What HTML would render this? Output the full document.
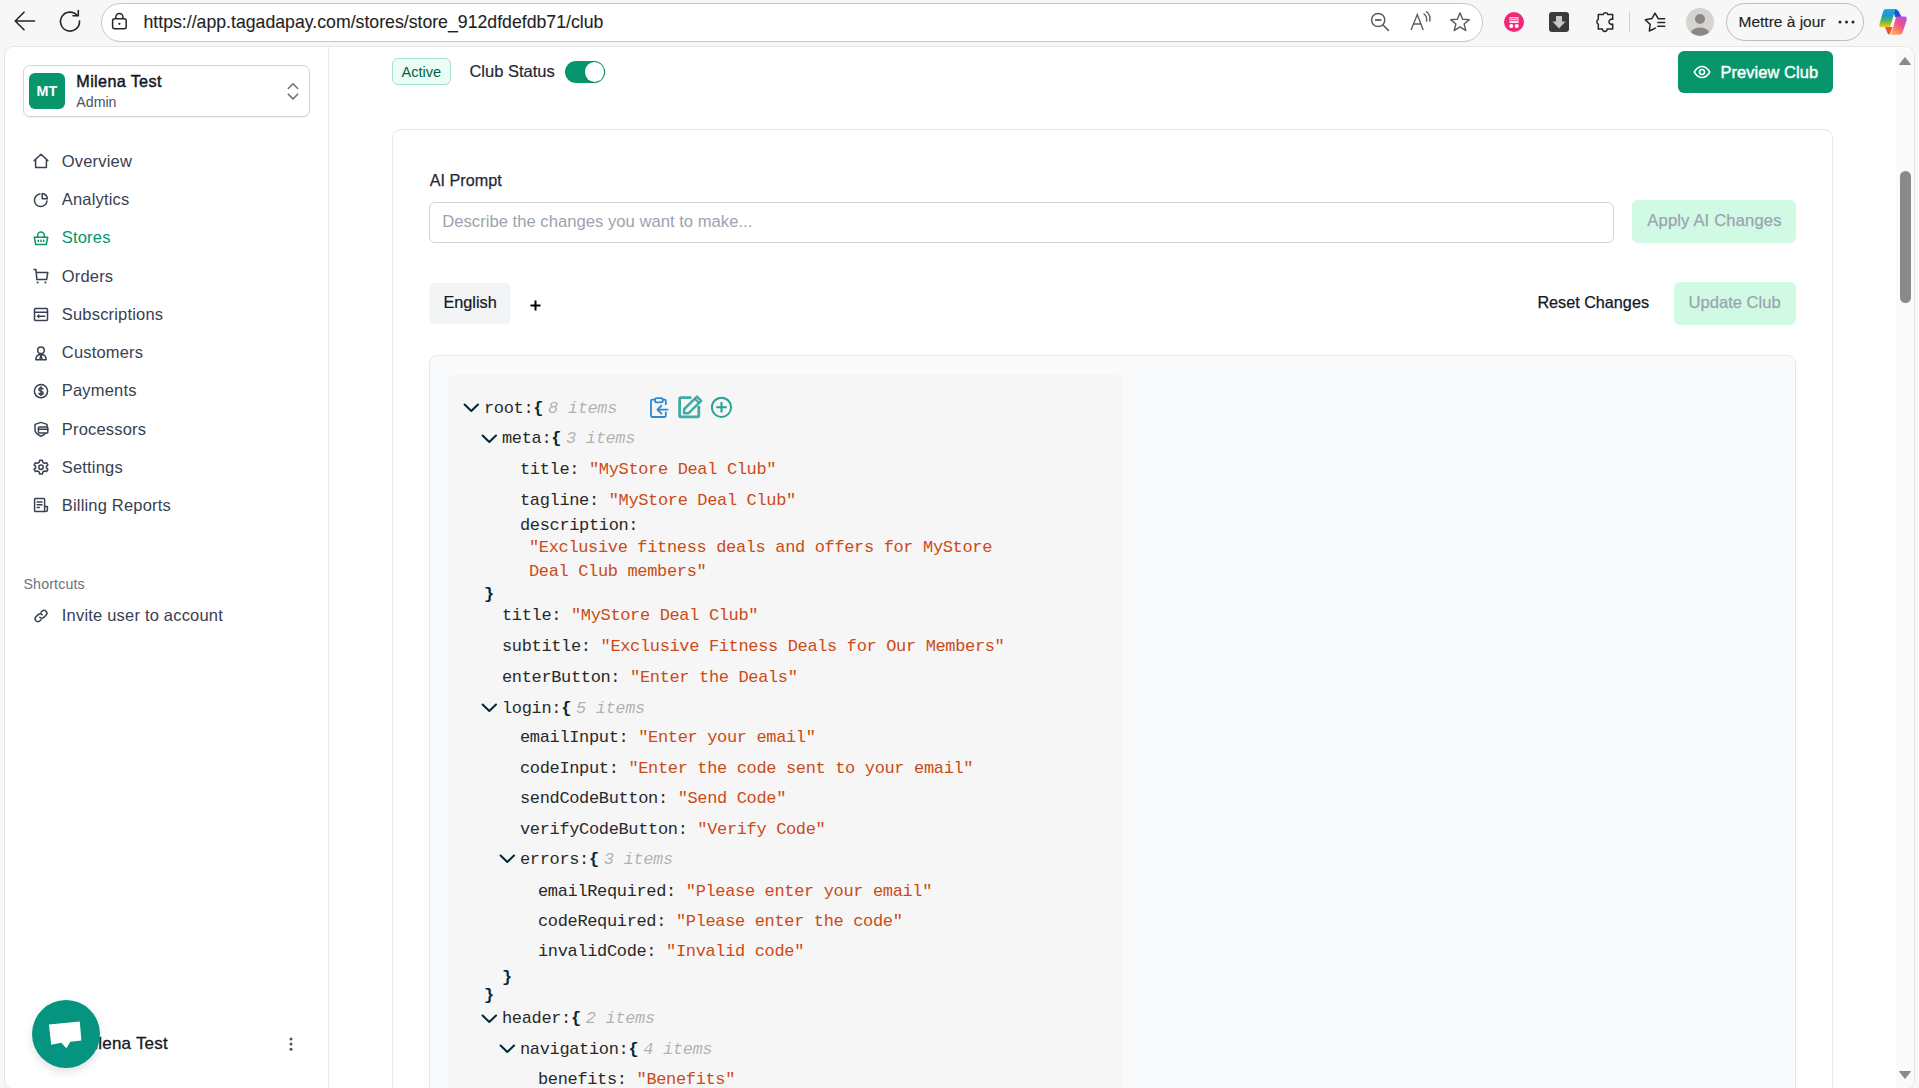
<!DOCTYPE html>
<html><head><meta charset="utf-8">
<style>
html,body{margin:0;padding:0;}
body{width:1919px;height:1088px;overflow:hidden;background:#f7f7f7;position:relative;font-family:"Liberation Sans", sans-serif;}
.a{position:absolute;}
.t{position:absolute;line-height:1;white-space:pre;}
.S{font-family:"Liberation Sans", sans-serif;}
.M{font-family:"Liberation Mono", monospace;}
svg{position:absolute;overflow:visible;}
</style></head><body>
<svg style="left:14px;top:11px;" width="22" height="20" viewBox="0 0 22 20"><path d="M1.2 10 H20.5 M10 1.2 L1.2 10 L10 18.8" fill="none" stroke="#262626" stroke-width="1.6" stroke-linecap="round" stroke-linejoin="round"/></svg>
<svg style="left:58px;top:7.9px;" width="24" height="24" viewBox="0 0 24 24"><path d="M19.4 7.6 A9.5 9.5 0 1 0 21.5 13" fill="none" stroke="#262626" stroke-width="1.6" stroke-linecap="round"/><path d="M20.3 2.5 V7.8 H15" fill="none" stroke="#262626" stroke-width="1.6" stroke-linecap="round" stroke-linejoin="round"/></svg>
<div class="a" style="left:100.5px;top:2.5px;width:1382px;height:39px;background:#fff;border:1px solid #c7c7c7;border-radius:20px;box-sizing:border-box;"></div>
<svg style="left:111px;top:12px;" width="18" height="18" viewBox="0 0 18 18"><rect x="1.6" y="6.8" width="13.6" height="10" rx="2" fill="none" stroke="#262626" stroke-width="1.5"/><path d="M4.8 6.8 V5 A3.6 3.6 0 0 1 12 5 V6.8" fill="none" stroke="#262626" stroke-width="1.5"/><circle cx="8.4" cy="11.8" r="1.1" fill="#262626"/></svg>
<div class="t S" style="left:143.5px;top:13.62px;font-size:17.7px;color:#1f1f1f;-webkit-text-stroke:0.1px currentColor;">https://app.tagadapay.com/stores/store_912dfdefdb71/club</div>
<svg style="left:1368px;top:11px;" width="24" height="24" viewBox="0 0 24 24"><circle cx="10.2" cy="9" r="6.6" fill="none" stroke="#5c5c5c" stroke-width="1.5"/><path d="M7 9 H13.4" stroke="#5c5c5c" stroke-width="1.8"/><path d="M15 14 L20.4 19.4" stroke="#5c5c5c" stroke-width="1.6" stroke-linecap="round"/></svg>
<svg style="left:1410px;top:11px;" width="24" height="22" viewBox="0 0 24 22"><path d="M1 19 L7.3 3.6 L13.2 19 M3.6 13 H11" fill="none" stroke="#5c5c5c" stroke-width="1.4"/><path d="M14 3 A7 7 0 0 1 16.5 10 M16.6 0.8 A9.5 9.5 0 0 1 19.8 10" fill="none" stroke="#5c5c5c" stroke-width="1.4" stroke-linecap="round"/></svg>
<svg style="left:1449px;top:11px;" width="24" height="22" viewBox="0 0 24 22"><path d="M11 1.8 L13.6 8.2 L20.3 8.6 L15.1 13 L16.8 19.6 L11 15.9 L5.2 19.6 L6.9 13 L1.7 8.6 L8.4 8.2 Z" fill="none" stroke="#5c5c5c" stroke-width="1.4" stroke-linejoin="round"/></svg>
<div class="a" style="left:1504px;top:12px;width:20px;height:20px;background:#f0287a;border-radius:50%;"></div>
<svg style="left:1504px;top:12px;" width="20" height="20" viewBox="0 0 20 20"><path d="M5.5 5.2 H14.5 V11 H5.5 Z" fill="#fff" opacity="0.9"/><path d="M6 6.8 H14 M6 8.6 H14" stroke="#f0287a" stroke-width="0.8"/><circle cx="7.3" cy="14" r="2" fill="#fff"/><circle cx="12.7" cy="14" r="2" fill="#fff"/></svg>
<div class="a" style="left:1549px;top:12px;width:20px;height:20px;background:#3b3b3b;border-radius:3px;"></div>
<svg style="left:1549px;top:12px;" width="20" height="20" viewBox="0 0 20 20"><path d="M7 4 H13 V9.5 H16.5 L10 16.5 L3.5 9.5 H7 Z" fill="#c9c9c9"/></svg>
<svg style="left:1590px;top:8px;" width="28" height="28" viewBox="1590 8 28 28"><path d="M1598.3 14.5 H1603.2 A2.4 2.4 0 0 1 1607.8 14.5 H1612.7 V19.4 A2.6 2.6 0 1 0 1612.7 24.1 V29 H1607.2 A2.4 2.4 0 0 1 1602.4 29 H1598.3 V24.1 A2.6 2.6 0 0 1 1598.3 19.4 Z" fill="none" stroke="#262626" stroke-width="1.5" stroke-linejoin="round"/></svg>
<div class="a" style="left:1629px;top:12px;width:1px;height:20px;background:#d0d0d0;"></div>
<svg style="left:1640px;top:8px;" width="30" height="28" viewBox="1640 8 30 28"><path d="M1655.4 28.1 L1649.3 31 L1650.2 24.4 L1645.3 19.8 L1651.9 18.6 L1655 13.2 L1658.2 18.7 H1664.6" fill="none" stroke="#262626" stroke-width="1.5" stroke-linejoin="round" stroke-linecap="round"/><path d="M1657.8 22.5 H1664.7 M1657.8 26.3 H1664.7" stroke="#262626" stroke-width="1.5" stroke-linecap="round"/></svg>
<div class="a" style="left:1686px;top:8px;width:28px;height:28px;background:#d6d4d0;border-radius:50%;"></div>
<svg style="left:1686px;top:8px;" width="28" height="28" viewBox="0 0 28 28"><circle cx="14" cy="11" r="5" fill="#8a8784"/><path d="M4.8 24 A10 7.5 0 0 1 23.2 24 A13 13 0 0 1 4.8 24 Z" fill="#8a8784"/></svg>
<div class="a" style="left:1726px;top:3px;width:138px;height:38px;border:1px solid #bdbdbd;border-radius:19px;box-sizing:border-box;background:#f7f7f7;"></div>
<div class="t S" style="left:1738.5px;top:13.98px;font-size:15.5px;color:#1f1f1f;-webkit-text-stroke:0.15px currentColor;">Mettre à jour</div>
<svg style="left:1838px;top:19px;" width="20" height="6" viewBox="0 0 20 6"><circle cx="2" cy="3" r="1.5" fill="#262626"/><circle cx="8.5" cy="3" r="1.5" fill="#262626"/><circle cx="15" cy="3" r="1.5" fill="#262626"/></svg>
<svg style="left:1874px;top:4px;" width="40" height="36" viewBox="0 0 40 36"><defs><linearGradient id="cpa" x1="0" y1="0" x2="0" y2="1"><stop offset="0" stop-color="#19a9f2"/><stop offset="0.35" stop-color="#1f96c8"/><stop offset="0.65" stop-color="#5db35a"/><stop offset="1" stop-color="#f6d20a"/></linearGradient><linearGradient id="cpb" x1="1" y1="0" x2="0.3" y2="1"><stop offset="0" stop-color="#b14cf2"/><stop offset="0.5" stop-color="#f0508c"/><stop offset="1" stop-color="#ffa85a"/></linearGradient></defs><path d="M19 5.2 Q24 4.5 26 10 L27.5 13 H21 Z" fill="#1d4fd8"/><path d="M11.5 5 H21.5 L16 23.2 H7.5 Q5 23.2 5.4 20.5 L8.8 8.6 Q9.8 5 11.5 5 Z" fill="url(#cpa)"/><path d="M11 23 H18.5 L16.2 29.5 Q15 31.3 13.6 29.6 Z" fill="#f45234"/><path d="M22.6 12.6 H30.5 Q33.4 12.8 32.6 16.2 L28.6 28.2 Q27.6 30.8 25 30.8 H16.8 L22 13.4 Z" fill="url(#cpb)"/></svg>
<div class="a" style="left:4px;top:46px;width:1911px;height:1043.5px;background:#fff;border:1px solid #e6e6e6;border-radius:10px;box-sizing:border-box;"></div>
<div class="a" style="left:328px;top:47px;width:1px;height:1041px;background:#e5e7eb;"></div>
<div class="a" style="left:23px;top:65px;width:287px;height:52px;border:1px solid #d1d5db;border-radius:7px;box-sizing:border-box;background:#fff;box-shadow:0 1px 2px rgba(0,0,0,0.05);"></div>
<div class="a" style="left:29px;top:73px;width:36px;height:36px;background:#07966b;border-radius:6px;"></div>
<div class="t S" style="left:36.5px;top:84.00px;font-size:14.3px;color:#fff;font-weight:700;">MT</div>
<div class="t S" style="left:76.3px;top:73.09px;font-size:16.2px;color:#111827;letter-spacing:0.35px;-webkit-text-stroke:0.45px currentColor;">Milena Test</div>
<div class="t S" style="left:76.3px;top:94.98px;font-size:14.2px;color:#4b5563;">Admin</div>
<svg style="left:286px;top:82px;" width="14" height="19" viewBox="0 0 14 19"><path d="M2.3 6.5 L7 1.8 L11.7 6.5 M2.3 12.2 L7 16.9 L11.7 12.2" fill="none" stroke="#6b7280" stroke-width="1.6" stroke-linecap="round" stroke-linejoin="round"/></svg>
<div class="t S" style="left:61.8px;top:153.03px;font-size:16.5px;color:#374151;letter-spacing:0.18px;">Overview</div>
<div class="t S" style="left:61.8px;top:191.43px;font-size:16.5px;color:#374151;letter-spacing:0.18px;">Analytics</div>
<div class="t S" style="left:61.8px;top:229.43px;font-size:16.5px;color:#059669;letter-spacing:0.18px;">Stores</div>
<div class="t S" style="left:61.8px;top:267.93px;font-size:16.5px;color:#374151;letter-spacing:0.18px;">Orders</div>
<div class="t S" style="left:61.8px;top:305.93px;font-size:16.5px;color:#374151;letter-spacing:0.18px;">Subscriptions</div>
<div class="t S" style="left:61.8px;top:344.43px;font-size:16.5px;color:#374151;letter-spacing:0.18px;">Customers</div>
<div class="t S" style="left:61.8px;top:382.43px;font-size:16.5px;color:#374151;letter-spacing:0.18px;">Payments</div>
<div class="t S" style="left:61.8px;top:420.73px;font-size:16.5px;color:#374151;letter-spacing:0.18px;">Processors</div>
<div class="t S" style="left:61.8px;top:458.73px;font-size:16.5px;color:#374151;letter-spacing:0.18px;">Settings</div>
<div class="t S" style="left:61.8px;top:497.33px;font-size:16.5px;color:#374151;letter-spacing:0.18px;">Billing Reports</div>
<svg style="left:33px;top:153.1px;" width="16" height="16" viewBox="0 0 16 16"><path d="M1.2 7.6 L8 1.2 L14.8 7.6 M2.6 6.3 V14.6 H13.4 V6.3" fill="none" stroke="#374151" stroke-width="1.5" stroke-linecap="round" stroke-linejoin="round"/></svg>
<svg style="left:33px;top:191.5px;" width="16" height="16" viewBox="0 0 16 16"><path d="M14 9 A6.3 6.3 0 1 1 7 2" fill="none" stroke="#374151" stroke-width="1.5" stroke-linecap="round" stroke-linejoin="round"/><path d="M9.2 1.6 A6 6 0 0 1 14.4 6.8 H9.2 Z" fill="none" stroke="#374151" stroke-width="1.5" stroke-linecap="round" stroke-linejoin="round"/></svg>
<svg style="left:33px;top:229.5px;" width="16" height="16" viewBox="0 0 16 16"><path d="M1.3 7.3 H14.7 L13.3 14.4 H2.7 Z M4.6 7.3 V5.5 A3.4 3.4 0 0 1 11.4 5.5 V7.3" fill="none" stroke="#059669" stroke-width="1.5" stroke-linecap="round" stroke-linejoin="round"/><path d="M5.3 10.2 V11.6 M8 10.2 V11.6 M10.7 10.2 V11.6" fill="none" stroke="#059669" stroke-width="1.5" stroke-linecap="round" stroke-linejoin="round"/></svg>
<svg style="left:33px;top:268px;" width="16" height="16" viewBox="0 0 16 16"><path d="M1 1.6 H3 L3.8 11.6 H13.6 L14.8 4.4 H4" fill="none" stroke="#374151" stroke-width="1.5" stroke-linecap="round" stroke-linejoin="round"/><circle cx="4.6" cy="14.6" r="1" fill="#374151"/><circle cx="12.4" cy="14.6" r="1" fill="#374151"/></svg>
<svg style="left:33px;top:306px;" width="16" height="16" viewBox="0 0 16 16"><rect x="1.5" y="2.5" width="13" height="12" rx="1" fill="none" stroke="#374151" stroke-width="1.5" stroke-linecap="round" stroke-linejoin="round"/><path d="M1.5 6.3 H14.5 M4.3 10.2 H7 M5.6 9 V11.4 M8 10.2 H11.7" fill="none" stroke="#374151" stroke-width="1.5" stroke-linecap="round" stroke-linejoin="round"/></svg>
<svg style="left:33px;top:344.5px;" width="16" height="16" viewBox="0 0 16 16"><circle cx="8" cy="5.2" r="3.3" fill="none" stroke="#374151" stroke-width="1.5" stroke-linecap="round" stroke-linejoin="round"/><path d="M2.8 14.8 Q3 9.6 8 9.6 Q13 9.6 13.2 14.8 Z M8 9.6 L6.8 14.8 M8 9.6 L9.2 14.8" fill="none" stroke="#374151" stroke-width="1.5" stroke-linecap="round" stroke-linejoin="round"/></svg>
<svg style="left:33px;top:382.5px;" width="16" height="16" viewBox="0 0 16 16"><circle cx="8" cy="8.2" r="6.6" fill="none" stroke="#374151" stroke-width="1.5" stroke-linecap="round" stroke-linejoin="round"/><path d="M10 6 Q9.5 4.9 8 4.9 Q5.9 4.9 5.9 6.5 Q5.9 7.8 8 8.2 Q10.2 8.6 10.2 10 Q10.2 11.5 8 11.5 Q6.4 11.5 5.9 10.4 M8 3.8 V12.6" fill="none" stroke="#374151" stroke-width="1.5" stroke-linecap="round" stroke-linejoin="round" stroke-width="1.1"/></svg>
<svg style="left:33px;top:420.8px;" width="16" height="16" viewBox="0 0 16 16"><path d="M8 1.4 L14 3.4 V8.8 Q14 12.8 8 15.2 Q2 12.8 2 8.8 V3.4 Z" fill="none" stroke="#374151" stroke-width="1.5" stroke-linecap="round" stroke-linejoin="round"/><rect x="5.4" y="6" width="9.4" height="6" rx="0.8" fill="#fff" fill="none" stroke="#374151" stroke-width="1.5" stroke-linecap="round" stroke-linejoin="round"/><path d="M5.4 8.2 H14.8" fill="none" stroke="#374151" stroke-width="1.5" stroke-linecap="round" stroke-linejoin="round"/></svg>
<svg style="left:33px;top:458.8px;" width="16" height="16" viewBox="0 0 16 16"><path d="M6.7 1.3 H9.3 L9.8 3.3 L11.6 4.3 L13.6 3.7 L14.9 6 L13.4 7.4 V9 L14.9 10.4 L13.6 12.6 L11.6 12 L9.8 13 L9.3 15 H6.7 L6.2 13 L4.4 12 L2.4 12.6 L1.1 10.4 L2.6 9 V7.4 L1.1 6 L2.4 3.7 L4.4 4.3 L6.2 3.3 Z" fill="none" stroke="#374151" stroke-width="1.5" stroke-linecap="round" stroke-linejoin="round"/><circle cx="8" cy="8.2" r="2.2" fill="none" stroke="#374151" stroke-width="1.5" stroke-linecap="round" stroke-linejoin="round"/></svg>
<svg style="left:33px;top:497.4px;" width="16" height="16" viewBox="0 0 16 16"><path d="M12.6 14.6 H2.4 Q1.6 14.6 1.6 13.8 V2.2 Q1.6 1.4 2.4 1.4 H10.8 Q11.6 1.4 11.6 2.2 V13.6 Q11.6 14.6 12.6 14.6 Q14.4 14.6 14.4 13.2 V9.5 H11.6" fill="none" stroke="#374151" stroke-width="1.5" stroke-linecap="round" stroke-linejoin="round"/><path d="M4.2 5 H9 M4.2 7.8 H9 M4.2 10.6 H6.4" fill="none" stroke="#374151" stroke-width="1.5" stroke-linecap="round" stroke-linejoin="round"/></svg>
<div class="t S" style="left:23.5px;top:576.88px;font-size:14.2px;color:#6b7280;letter-spacing:0.15px;">Shortcuts</div>
<div class="t S" style="left:61.8px;top:606.73px;font-size:16.5px;color:#374151;letter-spacing:0.2px;">Invite user to account</div>
<svg style="left:33px;top:607.8px;" width="16" height="16" viewBox="0 0 16 16"><path d="M6.8 9.2 A2.8 2.8 0 0 0 10.8 9.4 L13 7.2 A2.8 2.8 0 0 0 9 3.2 L8 4.2" fill="none" stroke="#374151" stroke-width="1.5" stroke-linecap="round" stroke-linejoin="round"/><path d="M9.2 6.8 A2.8 2.8 0 0 0 5.2 6.6 L3 8.8 A2.8 2.8 0 0 0 7 12.8 L8 11.8" fill="none" stroke="#374151" stroke-width="1.5" stroke-linecap="round" stroke-linejoin="round"/></svg>
<div class="t S" style="left:80px;top:1034.61px;font-size:17px;color:#111827;letter-spacing:0.2px;-webkit-text-stroke:0.3px currentColor;">Milena Test</div>
<svg style="left:288px;top:1036px;" width="6" height="16" viewBox="0 0 6 16"><circle cx="3" cy="3" r="1.5" fill="#4b5563"/><circle cx="3" cy="8" r="1.5" fill="#4b5563"/><circle cx="3" cy="13.3" r="1.5" fill="#4b5563"/></svg>
<div class="a" style="left:32px;top:1000px;width:68px;height:68px;background:#049480;border-radius:50%;box-shadow:0 4px 10px rgba(0,0,0,0.12);"></div>
<svg style="left:32px;top:1001.5px;" width="68" height="68" viewBox="0 0 68 68"><path d="M16.9 22.5 L47.8 19.5 L49.4 38.6 L38.3 39.8 L34.4 46.3 L29.2 40.8 L19.2 42.7 Z" fill="#fff"/></svg>
<div class="a" style="left:392px;top:58px;width:59px;height:27px;background:#ecfdf5;border:1px solid #a7e3c9;border-radius:6px;box-sizing:border-box;"></div>
<div class="t S" style="left:401.5px;top:64.54px;font-size:14.6px;color:#065f46;">Active</div>
<div class="t S" style="left:469.4px;top:62.93px;font-size:16.5px;color:#1f2937;-webkit-text-stroke:0.2px currentColor;">Club Status</div>
<div class="a" style="left:565px;top:61px;width:40px;height:22px;background:#07966b;border-radius:11px;"></div>
<div class="a" style="left:584.5px;top:62.4px;width:19.2px;height:19.2px;background:#fff;border-radius:50%;box-shadow:0 1px 3px rgba(0,0,0,0.15);"></div>
<div class="a" style="left:1678px;top:51px;width:155px;height:42px;background:#07966b;border-radius:6px;"></div>
<svg style="left:1693px;top:64px;" width="18" height="16" viewBox="0 0 18 16"><path d="M1.2 8 Q4.6 2.4 9 2.4 Q13.4 2.4 16.8 8 Q13.4 13.6 9 13.6 Q4.6 13.6 1.2 8 Z" fill="none" stroke="#fff" stroke-width="1.5" stroke-linejoin="round"/><circle cx="9" cy="8" r="2.5" fill="none" stroke="#fff" stroke-width="1.5"/></svg>
<div class="t S" style="left:1720.4px;top:63.72px;font-size:16.4px;color:#fff;letter-spacing:0.1px;-webkit-text-stroke:0.45px currentColor;">Preview Club</div>
<div class="a" style="left:392px;top:129px;width:1441px;height:1000px;border:1px solid #e5e7eb;border-radius:9px;box-sizing:border-box;background:#fff;"></div>
<div class="t S" style="left:429.7px;top:171.89px;font-size:16.2px;color:#1f2937;-webkit-text-stroke:0.25px currentColor;">AI Prompt</div>
<div class="a" style="left:429px;top:202px;width:1185px;height:41px;border:1px solid #d1d5db;border-radius:6px;box-sizing:border-box;background:#fff;"></div>
<div class="t S" style="left:442.2px;top:214.49px;font-size:16.67px;color:#9ca3af;">Describe the changes you want to make...</div>
<div class="a" style="left:1632px;top:200px;width:164px;height:43px;background:#d1fae5;border-radius:6px;"></div>
<div class="t S" style="left:1647.3px;top:212.55px;font-size:16.6px;color:#9ca3af;letter-spacing:0.15px;-webkit-text-stroke:0.25px currentColor;">Apply AI Changes</div>
<div class="a" style="left:429px;top:283px;width:82px;height:41px;background:#f3f4f6;border-radius:6px;"></div>
<div class="t S" style="left:443.4px;top:294.20px;font-size:16.3px;color:#111827;-webkit-text-stroke:0.2px currentColor;">English</div>
<svg style="left:530px;top:299.5px;" width="11" height="11" viewBox="0 0 11 11"><path d="M5.5 0.5 V10.5 M0.5 5.5 H10.5" stroke="#000" stroke-width="2"/></svg>
<div class="t S" style="left:1537.4px;top:294.09px;font-size:16.2px;color:#111827;-webkit-text-stroke:0.25px currentColor;">Reset Changes</div>
<div class="a" style="left:1674px;top:282px;width:122px;height:43px;background:#d1fae5;border-radius:6px;"></div>
<div class="t S" style="left:1688.5px;top:294.55px;font-size:16.6px;color:#9ca3af;-webkit-text-stroke:0.25px currentColor;">Update Club</div>
<div class="a" style="left:429px;top:355px;width:1367px;height:800px;border:1px solid #e5e7eb;border-radius:8px;box-sizing:border-box;background:#f9fafb;"></div>
<div class="a" style="left:448px;top:374px;width:675px;height:800px;background:#f6f6f6;border-radius:8px;"></div>
<div class="a" style="left:1896px;top:47.5px;width:18px;height:1041px;background:#fafafa;border-top-right-radius:9px;border-bottom-right-radius:9px;"></div>
<svg style="left:1898px;top:56px;" width="14" height="10" viewBox="0 0 14 10"><path d="M7 1.5 L12.5 8.5 H1.5 Z" fill="#8a8a8a" stroke="#8a8a8a" stroke-width="1" stroke-linejoin="round"/></svg>
<div class="a" style="left:1900px;top:171px;width:11px;height:132px;background:#8a8a8a;border-radius:6px;"></div>
<svg style="left:1898px;top:1070px;" width="14" height="10" viewBox="0 0 14 10"><path d="M7 8.5 L12.5 1.5 H1.5 Z" fill="#8a8a8a" stroke="#8a8a8a" stroke-width="1" stroke-linejoin="round"/></svg>
<svg style="left:463px;top:403px;" width="17" height="10" viewBox="0 0 17 10"><path d="M1.6 1.6 L8.3 8 L15 1.6" fill="none" stroke="rgb(0,43,54)" stroke-width="2.1" stroke-linecap="round" stroke-linejoin="round"/></svg>
<div class="t M" style="left:484px;top:399.98px;font-size:17px;color:#292929;letter-spacing:-0.35px;"><span style="color:#292929">root:</span><span style="color:rgb(0,43,54);font-weight:700">{</span></div>
<div class="t M" style="left:548.1102px;top:399.98px;font-size:17px;color:rgba(0,0,0,0.3);letter-spacing:-0.35px;font-style:italic;">8 items</div>
<svg style="left:481px;top:433.5px;" width="17" height="10" viewBox="0 0 17 10"><path d="M1.6 1.6 L8.3 8 L15 1.6" fill="none" stroke="rgb(0,43,54)" stroke-width="2.1" stroke-linecap="round" stroke-linejoin="round"/></svg>
<div class="t M" style="left:502px;top:430.48px;font-size:17px;color:#292929;letter-spacing:-0.35px;"><span style="color:#292929">meta:</span><span style="color:rgb(0,43,54);font-weight:700">{</span></div>
<div class="t M" style="left:566.1102px;top:430.48px;font-size:17px;color:rgba(0,0,0,0.3);letter-spacing:-0.35px;font-style:italic;">3 items</div>
<div class="t M" style="left:520px;top:461.18px;font-size:17px;color:#292929;letter-spacing:-0.35px;"><span style="color:#292929">title: </span><span style="color:rgb(203,75,22)">"MyStore Deal Club"</span></div>
<div class="t M" style="left:520px;top:491.78px;font-size:17px;color:#292929;letter-spacing:-0.35px;"><span style="color:#292929">tagline: </span><span style="color:rgb(203,75,22)">"MyStore Deal Club"</span></div>
<div class="t M" style="left:520px;top:516.98px;font-size:17px;color:#292929;letter-spacing:-0.35px;">description:</div>
<div class="t M" style="left:529px;top:538.98px;font-size:17px;color:rgb(203,75,22);letter-spacing:-0.35px;">"Exclusive fitness deals and offers for MyStore</div>
<div class="t M" style="left:529px;top:562.98px;font-size:17px;color:rgb(203,75,22);letter-spacing:-0.35px;">Deal Club members"</div>
<div class="t M" style="left:484px;top:585.98px;font-size:17px;color:rgb(0,43,54);letter-spacing:-0.35px;font-weight:700;">}</div>
<div class="t M" style="left:502px;top:606.98px;font-size:17px;color:#292929;letter-spacing:-0.35px;"><span style="color:#292929">title: </span><span style="color:rgb(203,75,22)">"MyStore Deal Club"</span></div>
<div class="t M" style="left:502px;top:637.98px;font-size:17px;color:#292929;letter-spacing:-0.35px;"><span style="color:#292929">subtitle: </span><span style="color:rgb(203,75,22)">"Exclusive Fitness Deals for Our Members"</span></div>
<div class="t M" style="left:502px;top:668.98px;font-size:17px;color:#292929;letter-spacing:-0.35px;"><span style="color:#292929">enterButton: </span><span style="color:rgb(203,75,22)">"Enter the Deals"</span></div>
<svg style="left:481px;top:702.7px;" width="17" height="10" viewBox="0 0 17 10"><path d="M1.6 1.6 L8.3 8 L15 1.6" fill="none" stroke="rgb(0,43,54)" stroke-width="2.1" stroke-linecap="round" stroke-linejoin="round"/></svg>
<div class="t M" style="left:502px;top:699.68px;font-size:17px;color:#292929;letter-spacing:-0.35px;"><span style="color:#292929">login:</span><span style="color:rgb(0,43,54);font-weight:700">{</span></div>
<div class="t M" style="left:575.9619px;top:699.68px;font-size:17px;color:rgba(0,0,0,0.3);letter-spacing:-0.35px;font-style:italic;">5 items</div>
<div class="t M" style="left:520px;top:729.48px;font-size:17px;color:#292929;letter-spacing:-0.35px;"><span style="color:#292929">emailInput: </span><span style="color:rgb(203,75,22)">"Enter your email"</span></div>
<div class="t M" style="left:520px;top:759.98px;font-size:17px;color:#292929;letter-spacing:-0.35px;"><span style="color:#292929">codeInput: </span><span style="color:rgb(203,75,22)">"Enter the code sent to your email"</span></div>
<div class="t M" style="left:520px;top:790.48px;font-size:17px;color:#292929;letter-spacing:-0.35px;"><span style="color:#292929">sendCodeButton: </span><span style="color:rgb(203,75,22)">"Send Code"</span></div>
<div class="t M" style="left:520px;top:820.98px;font-size:17px;color:#292929;letter-spacing:-0.35px;"><span style="color:#292929">verifyCodeButton: </span><span style="color:rgb(203,75,22)">"Verify Code"</span></div>
<svg style="left:499px;top:854.4px;" width="17" height="10" viewBox="0 0 17 10"><path d="M1.6 1.6 L8.3 8 L15 1.6" fill="none" stroke="rgb(0,43,54)" stroke-width="2.1" stroke-linecap="round" stroke-linejoin="round"/></svg>
<div class="t M" style="left:520px;top:851.38px;font-size:17px;color:#292929;letter-spacing:-0.35px;"><span style="color:#292929">errors:</span><span style="color:rgb(0,43,54);font-weight:700">{</span></div>
<div class="t M" style="left:603.8136px;top:851.38px;font-size:17px;color:rgba(0,0,0,0.3);letter-spacing:-0.35px;font-style:italic;">3 items</div>
<div class="t M" style="left:538px;top:882.98px;font-size:17px;color:#292929;letter-spacing:-0.35px;"><span style="color:#292929">emailRequired: </span><span style="color:rgb(203,75,22)">"Please enter your email"</span></div>
<div class="t M" style="left:538px;top:912.98px;font-size:17px;color:#292929;letter-spacing:-0.35px;"><span style="color:#292929">codeRequired: </span><span style="color:rgb(203,75,22)">"Please enter the code"</span></div>
<div class="t M" style="left:538px;top:943.48px;font-size:17px;color:#292929;letter-spacing:-0.35px;"><span style="color:#292929">invalidCode: </span><span style="color:rgb(203,75,22)">"Invalid code"</span></div>
<div class="t M" style="left:502px;top:968.98px;font-size:17px;color:rgb(0,43,54);letter-spacing:-0.35px;font-weight:700;">}</div>
<div class="t M" style="left:484px;top:986.98px;font-size:17px;color:rgb(0,43,54);letter-spacing:-0.35px;font-weight:700;">}</div>
<svg style="left:481px;top:1013.5px;" width="17" height="10" viewBox="0 0 17 10"><path d="M1.6 1.6 L8.3 8 L15 1.6" fill="none" stroke="rgb(0,43,54)" stroke-width="2.1" stroke-linecap="round" stroke-linejoin="round"/></svg>
<div class="t M" style="left:502px;top:1010.48px;font-size:17px;color:#292929;letter-spacing:-0.35px;"><span style="color:#292929">header:</span><span style="color:rgb(0,43,54);font-weight:700">{</span></div>
<div class="t M" style="left:585.8136px;top:1010.48px;font-size:17px;color:rgba(0,0,0,0.3);letter-spacing:-0.35px;font-style:italic;">2 items</div>
<svg style="left:499px;top:1044px;" width="17" height="10" viewBox="0 0 17 10"><path d="M1.6 1.6 L8.3 8 L15 1.6" fill="none" stroke="rgb(0,43,54)" stroke-width="2.1" stroke-linecap="round" stroke-linejoin="round"/></svg>
<div class="t M" style="left:520px;top:1040.98px;font-size:17px;color:#292929;letter-spacing:-0.35px;"><span style="color:#292929">navigation:</span><span style="color:rgb(0,43,54);font-weight:700">{</span></div>
<div class="t M" style="left:643.2203999999999px;top:1040.98px;font-size:17px;color:rgba(0,0,0,0.3);letter-spacing:-0.35px;font-style:italic;">4 items</div>
<div class="t M" style="left:538px;top:1070.98px;font-size:17px;color:#292929;letter-spacing:-0.35px;"><span style="color:#292929">benefits: </span><span style="color:rgb(203,75,22)">"Benefits"</span></div>
<svg style="left:650px;top:397px;" width="19" height="22" viewBox="0 0 19 22"><path d="M15.8 7.2 V3.8 Q15.8 2.6 14.6 2.6 H2.2 Q1 2.6 1 3.8 V18.8 Q1 20 2.2 20 H14.6 Q15.8 20 15.8 18.8 V15.4" fill="none" stroke="rgb(38,139,210)" stroke-width="1.8" stroke-linecap="round"/><rect x="5" y="1.2" width="7.8" height="4.2" rx="1.6" fill="#f6f6f6" stroke="rgb(38,139,210)" stroke-width="1.8"/><path d="M17.6 12.6 H7.6 M11.4 8.6 L7.4 12.6 L11.4 16.6" fill="none" stroke="rgb(38,139,210)" stroke-width="1.8" stroke-linecap="round" stroke-linejoin="round"/></svg>
<svg style="left:677px;top:395px;" width="26" height="25" viewBox="0 0 26 25"><path d="M14.4 2.6 H3.8 Q2.6 2.6 2.6 3.8 V20.6 Q2.6 21.8 3.8 21.8 H20.6 Q21.8 21.8 21.8 20.6 V11" fill="none" stroke="rgb(42,161,152)" stroke-width="2.8" opacity="0.88"/><path d="M7 18.2 L7.2 14 L20 1.6 L24.2 5.8 L11.6 18.2 Z" fill="none" stroke="rgb(42,161,152)" stroke-width="2.5" stroke-linejoin="round" opacity="0.88"/><path d="M17.8 3.8 L22 8" stroke="rgb(42,161,152)" stroke-width="2" opacity="0.88"/></svg>
<svg style="left:710px;top:396px;" width="23" height="23" viewBox="0 0 23 23"><circle cx="11.5" cy="11.3" r="9.6" fill="none" stroke="rgb(42,161,152)" stroke-width="2"/><path d="M11.5 6 V16.6 M6.2 11.3 H16.8" stroke="rgb(42,161,152)" stroke-width="2.1"/></svg>

</body></html>
